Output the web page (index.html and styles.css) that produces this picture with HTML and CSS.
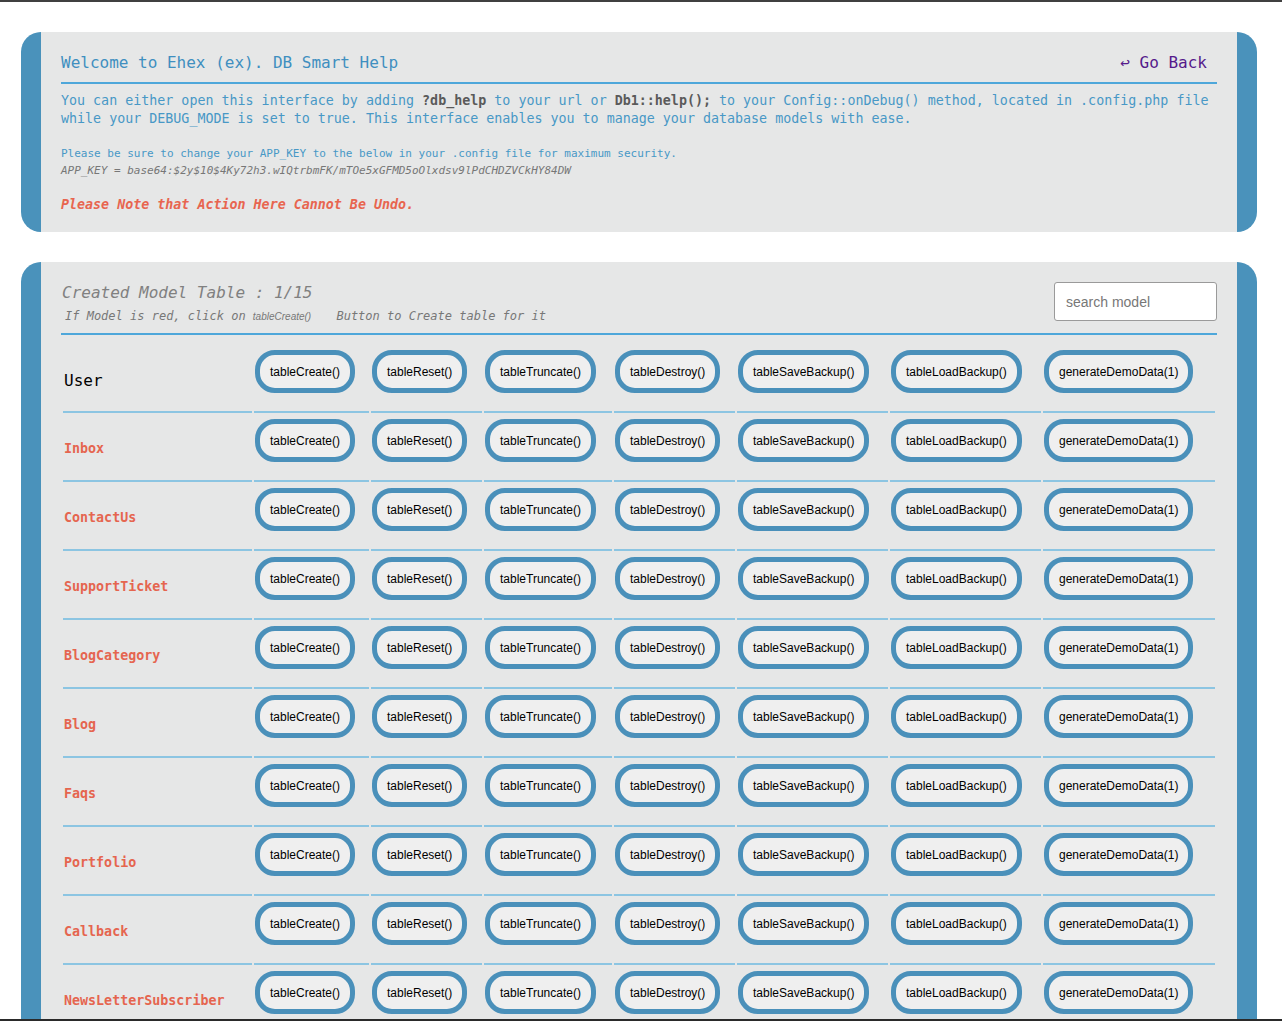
FILE: index.html
```html
<!DOCTYPE html>
<html lang="en">
<head>
<meta charset="utf-8">
<title>Ehex DB Smart Help</title>
<link rel="stylesheet" href="styles.css">
</head>
<body>
<main class="page">
  <section class="panel intro">
    <div class="intro-head">
      <h1 class="intro-title">Welcome to Ehex (ex). DB Smart Help</h1>
      <a class="back" href="#">&#8617; Go Back</a>
    </div>
    <p class="lead">You can either open this interface by adding <b>?db_help</b> to your url or <b>Db1::help();</b> to your Config::onDebug() method, located in .config.php file while your DEBUG_MODE is set to true. This interface enables you to manage your database models with ease.</p>
    <p class="keynote">Please be sure to change your APP_KEY to the below in your .config file for maximum security.<br><i class="appkey">APP_KEY = base64:$2y$10$4Ky72h3.wIQtrbmFK/mTOe5xGFMD5oOlxdsv9lPdCHDZVCkHY84DW</i></p>
    <p class="warn">Please Note that Action Here Cannot Be Undo.</p>
  </section>

  <section class="panel models">
    <div class="models-head">
      <div class="models-heading">
        <h2 class="models-title">Created Model Table : 1/15</h2>
        <p class="models-sub">If Model is red, click on <code class="code">tableCreate()</code> Button to Create table for it</p>
      </div>
      <input class="search" type="text" placeholder="search model">
    </div>

    <div class="row first">
      <div class="cell name ok">User</div>
      <div class="cell"><button class="btn">tableCreate()</button></div>
      <div class="cell"><button class="btn">tableReset()</button></div>
      <div class="cell"><button class="btn">tableTruncate()</button></div>
      <div class="cell"><button class="btn">tableDestroy()</button></div>
      <div class="cell"><button class="btn">tableSaveBackup()</button></div>
      <div class="cell"><button class="btn">tableLoadBackup()</button></div>
      <div class="cell"><button class="btn">generateDemoData(1)</button></div>
    </div>
    <div class="row">
      <div class="cell name">Inbox</div>
      <div class="cell"><button class="btn">tableCreate()</button></div>
      <div class="cell"><button class="btn">tableReset()</button></div>
      <div class="cell"><button class="btn">tableTruncate()</button></div>
      <div class="cell"><button class="btn">tableDestroy()</button></div>
      <div class="cell"><button class="btn">tableSaveBackup()</button></div>
      <div class="cell"><button class="btn">tableLoadBackup()</button></div>
      <div class="cell"><button class="btn">generateDemoData(1)</button></div>
    </div>
    <div class="row">
      <div class="cell name">ContactUs</div>
      <div class="cell"><button class="btn">tableCreate()</button></div>
      <div class="cell"><button class="btn">tableReset()</button></div>
      <div class="cell"><button class="btn">tableTruncate()</button></div>
      <div class="cell"><button class="btn">tableDestroy()</button></div>
      <div class="cell"><button class="btn">tableSaveBackup()</button></div>
      <div class="cell"><button class="btn">tableLoadBackup()</button></div>
      <div class="cell"><button class="btn">generateDemoData(1)</button></div>
    </div>
    <div class="row">
      <div class="cell name">SupportTicket</div>
      <div class="cell"><button class="btn">tableCreate()</button></div>
      <div class="cell"><button class="btn">tableReset()</button></div>
      <div class="cell"><button class="btn">tableTruncate()</button></div>
      <div class="cell"><button class="btn">tableDestroy()</button></div>
      <div class="cell"><button class="btn">tableSaveBackup()</button></div>
      <div class="cell"><button class="btn">tableLoadBackup()</button></div>
      <div class="cell"><button class="btn">generateDemoData(1)</button></div>
    </div>
    <div class="row">
      <div class="cell name">BlogCategory</div>
      <div class="cell"><button class="btn">tableCreate()</button></div>
      <div class="cell"><button class="btn">tableReset()</button></div>
      <div class="cell"><button class="btn">tableTruncate()</button></div>
      <div class="cell"><button class="btn">tableDestroy()</button></div>
      <div class="cell"><button class="btn">tableSaveBackup()</button></div>
      <div class="cell"><button class="btn">tableLoadBackup()</button></div>
      <div class="cell"><button class="btn">generateDemoData(1)</button></div>
    </div>
    <div class="row">
      <div class="cell name">Blog</div>
      <div class="cell"><button class="btn">tableCreate()</button></div>
      <div class="cell"><button class="btn">tableReset()</button></div>
      <div class="cell"><button class="btn">tableTruncate()</button></div>
      <div class="cell"><button class="btn">tableDestroy()</button></div>
      <div class="cell"><button class="btn">tableSaveBackup()</button></div>
      <div class="cell"><button class="btn">tableLoadBackup()</button></div>
      <div class="cell"><button class="btn">generateDemoData(1)</button></div>
    </div>
    <div class="row">
      <div class="cell name">Faqs</div>
      <div class="cell"><button class="btn">tableCreate()</button></div>
      <div class="cell"><button class="btn">tableReset()</button></div>
      <div class="cell"><button class="btn">tableTruncate()</button></div>
      <div class="cell"><button class="btn">tableDestroy()</button></div>
      <div class="cell"><button class="btn">tableSaveBackup()</button></div>
      <div class="cell"><button class="btn">tableLoadBackup()</button></div>
      <div class="cell"><button class="btn">generateDemoData(1)</button></div>
    </div>
    <div class="row">
      <div class="cell name">Portfolio</div>
      <div class="cell"><button class="btn">tableCreate()</button></div>
      <div class="cell"><button class="btn">tableReset()</button></div>
      <div class="cell"><button class="btn">tableTruncate()</button></div>
      <div class="cell"><button class="btn">tableDestroy()</button></div>
      <div class="cell"><button class="btn">tableSaveBackup()</button></div>
      <div class="cell"><button class="btn">tableLoadBackup()</button></div>
      <div class="cell"><button class="btn">generateDemoData(1)</button></div>
    </div>
    <div class="row">
      <div class="cell name">Callback</div>
      <div class="cell"><button class="btn">tableCreate()</button></div>
      <div class="cell"><button class="btn">tableReset()</button></div>
      <div class="cell"><button class="btn">tableTruncate()</button></div>
      <div class="cell"><button class="btn">tableDestroy()</button></div>
      <div class="cell"><button class="btn">tableSaveBackup()</button></div>
      <div class="cell"><button class="btn">tableLoadBackup()</button></div>
      <div class="cell"><button class="btn">generateDemoData(1)</button></div>
    </div>
    <div class="row">
      <div class="cell name">NewsLetterSubscriber</div>
      <div class="cell"><button class="btn">tableCreate()</button></div>
      <div class="cell"><button class="btn">tableReset()</button></div>
      <div class="cell"><button class="btn">tableTruncate()</button></div>
      <div class="cell"><button class="btn">tableDestroy()</button></div>
      <div class="cell"><button class="btn">tableSaveBackup()</button></div>
      <div class="cell"><button class="btn">tableLoadBackup()</button></div>
      <div class="cell"><button class="btn">generateDemoData(1)</button></div>
    </div>
    <div class="row">
      <div class="cell name">Testimonial</div>
      <div class="cell"><button class="btn">tableCreate()</button></div>
      <div class="cell"><button class="btn">tableReset()</button></div>
      <div class="cell"><button class="btn">tableTruncate()</button></div>
      <div class="cell"><button class="btn">tableDestroy()</button></div>
      <div class="cell"><button class="btn">tableSaveBackup()</button></div>
      <div class="cell"><button class="btn">tableLoadBackup()</button></div>
      <div class="cell"><button class="btn">generateDemoData(1)</button></div>
    </div>
  </section>
</main>
<div class="frame-bottom"></div>
</body>
</html>
```

FILE: styles.css
```css
html {
  border-top: 2px solid #404040;
  background: #ffffff;
}

body {
  margin: 0;
  font-family: "DejaVu Sans Mono", "Liberation Mono", monospace;
}

.page {
  padding: 0 25px 0 21px;
}

.panel {
  margin-top: 30px;
  background: #e6e7e7;
  border-left: 20px solid #4a92bb;
  border-right: 20px solid #4a92bb;
  border-radius: 20px;
}

/* ---------- intro panel ---------- */
.intro {
  padding: 21px 20px 18px;
}

.intro-head {
  display: flex;
  justify-content: space-between;
  align-items: baseline;
  padding-bottom: 10px;
  border-bottom: 2px solid #4ea7da;
}

.intro-title {
  margin: 0;
  font-size: 16px;
  line-height: 19px;
  font-weight: normal;
  color: #3f8fc0;
}

.back {
  margin-right: 10px;
  font-size: 16px;
  line-height: 19px;
  color: #551a8b;
  text-decoration: none;
}

.lead {
  margin: 8px 0 0;
  font-size: 13.33px;
  line-height: 18px;
  color: #4898c6;
}

.lead b {
  color: #5a5a5a;
}

.keynote {
  margin: 17px 0 0;
  font-size: 11px;
  line-height: 17px;
  color: #4898c6;
}

.appkey {
  color: #777777;
}

.warn {
  margin: 17px 0 0;
  font-size: 13.33px;
  line-height: 18px;
  font-weight: bold;
  font-style: italic;
  color: #e8654f;
}

/* ---------- models panel ---------- */
.models {
  padding: 20px 20px 0;
}

.models-head {
  display: flex;
  justify-content: space-between;
  align-items: flex-start;
  padding-bottom: 9px;
  border-bottom: 2px solid #4ea7da;
}

.models-heading {
  padding-left: 1px;
  padding-top: 1px;
}

.models-title {
  margin: 0;
  font-size: 16px;
  line-height: 20px;
  font-weight: normal;
  font-style: italic;
  color: #808080;
}

.models-sub {
  margin: 6px 0 0 3px;
  font-size: 12px;
  line-height: 15px;
  font-style: italic;
  color: #777777;
}

.code {
  font-family: "Liberation Sans", Arial, sans-serif;
  font-size: 10px;
  font-style: italic;
  margin-right: 18px;
}

.search {
  box-sizing: border-box;
  width: 163px;
  height: 39px;
  margin: 0;
  padding: 0 11px;
  border: 1px solid #9a9a9a;
  border-radius: 3px;
  background: #ffffff;
  font-family: "Liberation Sans", Arial, sans-serif;
  font-size: 14px;
  color: #333333;
}

.search::placeholder {
  color: #777777;
}

.row {
  display: grid;
  grid-template-columns: 189px 115px 111px 128px 121px 151px 151px 172px;
  column-gap: 2px;
  margin: 0 2px;
}

.cell {
  padding: 6px 1px 18px;
  border-top: 2px solid #8cc5e2;
}

.row.first .cell {
  border-top: 0;
  padding-top: 15px;
}

.name {
  padding-top: 28px;
  padding-bottom: 0;
  font-size: 13.33px;
  line-height: 16px;
  font-weight: bold;
  color: #e5654f;
}

.row.first .name.ok {
  padding-top: 36px;
  font-size: 16px;
  line-height: 19px;
  font-weight: normal;
  color: #000000;
}

.btn {
  box-sizing: border-box;
  height: 43px;
  margin: 0;
  padding: 0 10px;
  border: 5px solid #4a90ba;
  border-radius: 20px;
  background: #efefef;
  color: #000000;
  font-family: "Liberation Sans", Arial, sans-serif;
  font-size: 12px;
  line-height: 14px;
  white-space: nowrap;
}

.frame-bottom {
  position: fixed;
  left: 0;
  right: 0;
  bottom: 0;
  height: 2px;
  background: #2a2a2a;
}
```
